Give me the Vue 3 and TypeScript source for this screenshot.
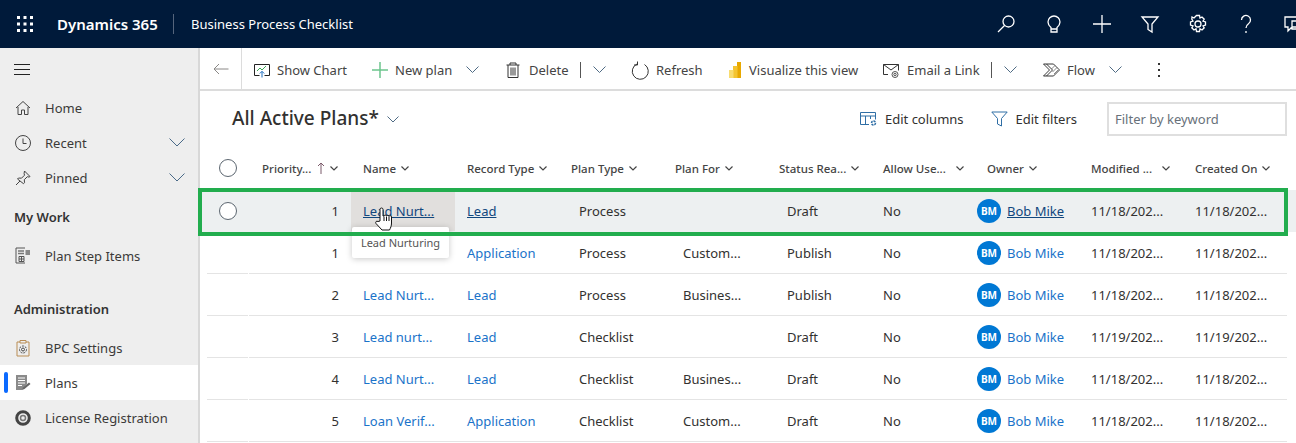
<script setup lang="ts">
type Cmd = { label: string; w: number; gap: number; svg: string; sep?: boolean; chev?: boolean }
type Row = {
  pri: string
  name: string
  rec: string
  plan: string
  planFor: string
  status: string
  mod: string
  created: string
}

const topIcons = [
  '<circle cx="12.5" cy="7.5" r="5.5"/><path d="M8.5 11.5 2 18"/>',
  '<path d="M7 13.5c-1.5-1.3-3-3-3-5.5a6 6 0 0 1 12 0c0 2.500-1.500 4.200-3 5.500v4.500H7zM7 15h6"/>',
  '<path d="M10 1v18M1 10h18"/>',
  '<path d="M2 3h16l-6 7v8l-4-2.500V10z"/>',
  '<circle cx="10" cy="10" r="3"/><path d="M8.500 1.500h3l.5 2.500 2-1 2.200 2.200-1.200 2 2.500.8v3l-2.500.8 1.200 2-2.200 2.200-2-1.200-.5 2.700h-3l-.5-2.700-2 1.200-2.200-2.200 1.200-2-2.500-.8v-3l2.500-.8-1.200-2L4 3l2 1z"/>',
  '<path d="M5.500 6a4.500 4.500 0 1 1 7 3.700c-1.500 1-2.500 1.800-2.500 4.300M10 17v2"/>',
  '<path d="M1 3h14v10H8l-4 4v-4H1zM8 7h11v8h-2v3l-3-3H8z"/>',
]

const cmds: Cmd[] = [
  {
    label: 'Show Chart',
    w: 118,
    gap: 7,
    svg: '<path d="M.5 2.500h15v11h-5M5.500 13.500h-5v-11" stroke="#222"/><path d="m3 9 3-3 2 2 4-4" stroke="#3aa655"/><path d="M8 15.500v-6M5.800 11.500 8 9.300l2.200 2.200" stroke="#1f6fc0"/>',
  },
  {
    label: 'New plan',
    w: 134,
    gap: 7,
    chev: true,
    svg: '<path d="M8 0v16M0 8h16" stroke="#6cc58d" stroke-width="1.500"/>',
  },
  {
    label: 'Delete',
    w: 126,
    gap: 7,
    sep: true,
    chev: true,
    svg: '<path d="M.5 3h13M4 3V1h6v2M2 3v12.500h10V3M5 5.500v8M7 5.500v8M9 5.500v8" stroke="#333"/>',
  },
  {
    label: 'Refresh',
    w: 96,
    gap: 8,
    svg: '<path d="M12.500 2.500a8 8 0 1 1-7.500-.5M5.500 -.5v3.500H2" stroke="#333" transform="translate(0 0)"/>',
  },
  {
    label: 'Visualize this view',
    w: 155,
    gap: 5,
    svg: '<rect x="9" y="0" width="4" height="16" fill="#e8a800"/><rect x="5" y="4" width="4.500" height="12" fill="#f4c430"/><rect x="1" y="8" width="4.500" height="8" fill="#f8dc70"/>',
  },
  {
    label: 'Email a Link',
    w: 160,
    gap: 8,
    sep: true,
    chev: true,
    svg: '<path d="M5 12.500H.5v-10h15v6M.5 2.500 8 8l7.500-5.500" stroke="#333"/><circle cx="12" cy="12.500" r="3" stroke="#555"/><circle cx="12" cy="12.500" r="1.200" stroke="#555"/>',
  },
  {
    label: 'Flow',
    w: 114,
    gap: 8,
    chev: true,
    svg: '<path d="M.5 2h10l6 6-6 6H.5l6-6zM3.500 2l6 6-6 6" stroke="#222" stroke-width=".9"/><path d="m12 3.500-3.500 3.500M14 5.500l-4.500 4.500M15 8l-4 4" stroke="#555" stroke-width=".7"/>',
  },
]

const navTop = [
  {
    label: 'Home',
    svg: '<path d="M1 8 8 1.500 15 8M3 7v7.500h3.500V10h3v4.500H13V7"/>',
    chev: false,
  },
  {
    label: 'Recent',
    svg: '<circle cx="8" cy="8" r="7.500"/><path d="M8 3.500V8.500h3.500"/>',
    chev: true,
  },
  {
    label: 'Pinned',
    svg: '<path d="M9.500 1 15 6.500l-1 .6-1.700-.4-3 3 .2 3-1 1L2.500 9l1-1 3 .2 3-3-.4-1.700zM5 11l-4 4"/>',
    chev: true,
  },
]

const rows: Row[] = [
  { pri: '1', name: 'Lead Nurt...', rec: 'Lead', plan: 'Process', planFor: '', status: 'Draft', mod: '11/18/202...', created: '11/18/202...' },
  { pri: '1', name: '', rec: 'Application', plan: 'Process', planFor: 'Custom...', status: 'Publish', mod: '11/18/202...', created: '11/18/202...' },
  { pri: '2', name: 'Lead Nurt...', rec: 'Lead', plan: 'Process', planFor: 'Busines...', status: 'Publish', mod: '11/18/202...', created: '11/18/202...' },
  { pri: '3', name: 'Lead nurt...', rec: 'Lead', plan: 'Checklist', planFor: '', status: 'Draft', mod: '11/19/202...', created: '11/19/202...' },
  { pri: '4', name: 'Lead Nurt...', rec: 'Lead', plan: 'Checklist', planFor: 'Busines...', status: 'Draft', mod: '11/18/202...', created: '11/18/202...' },
  { pri: '5', name: 'Loan Verif...', rec: 'Application', plan: 'Checklist', planFor: 'Custom...', status: 'Draft', mod: '11/18/202...', created: '11/18/202...' },
]

const cols = ['Name', 'Record Type', 'Plan Type', 'Plan For', 'Status Rea...', 'Allow Use...', 'Owner', 'Modified ...', 'Created On']
const wideChev = ['Allow Use...', 'Modified ...']
</script>

<template>
  <div class="app">
    <header class="topbar">
      <svg class="waffle" width="16" height="16" viewBox="0 0 16 16" fill="#fff">
        <template v-for="y in [0, 6.500, 13]" :key="y">
          <rect v-for="x in [0, 6.500, 13]" :key="x" :x="x" :y="y" width="3" height="3" />
        </template>
      </svg>
      <span class="brand">Dynamics 365</span>
      <span class="appname">Business Process Checklist</span>
      <div class="top-icons">
        <span v-for="(ic, i) in topIcons" :key="i" class="top-icon">
          <svg width="20" height="20" viewBox="0 0 20 20" fill="none" stroke="#fff" stroke-width="1.300" v-html="ic" />
        </span>
      </div>
    </header>

    <div class="body">
      <aside class="side">
        <div class="burger"><i /><i /><i /></div>
        <div v-for="n in navTop" :key="n.label" class="nav-item">
          <svg width="16" height="16" viewBox="0 0 16 16" fill="none" stroke="#444" v-html="n.svg" />
          <span>{{ n.label }}</span>
          <svg v-if="n.chev" class="nav-chev" width="16" height="9" viewBox="0 0 16 9" fill="none" stroke="#4a6a88"><path d="m.5.5 7.500 7.500 7.500-7.500" /></svg>
        </div>
        <div class="nav-head first">My Work</div>
        <div class="nav-item">
          <svg width="16" height="18" viewBox="0 0 16 18" fill="none" stroke="#555">
            <path d="M10 1H1v15h9" />
            <path d="M3 4h6M3 6.500h6" stroke="#777" stroke-width="1.500" />
            <path d="M4 9.500h5v5H4zM6.500 9.500v5M4 12h5" />
            <path d="M10.500 3h4.500v5h-4.500z" fill="#888" stroke="none" />
          </svg>
          <span>Plan Step Items</span>
        </div>
        <div class="nav-head second">Administration</div>
        <div class="nav-item">
          <svg width="16" height="18" viewBox="0 0 16 18" fill="none" stroke="#444">
            <path d="M5 3H2v14h12V3h-3M5 1.500h6V4H5z" stroke="#b98d55" />
            <circle cx="8" cy="10.500" r="1.500" />
            <circle cx="8" cy="10.500" r="3.500" stroke-dasharray="2 1" />
          </svg>
          <span>BPC Settings</span>
        </div>
        <div class="nav-item active">
          <svg width="16" height="18" viewBox="0 0 16 18">
            <path d="M1 1h11v9l-5 6H1z" fill="#8a8a8a" />
            <path d="M3 4h7M3 6.500h7M3 9h7M3 11.500h4" stroke="#fff" />
            <path d="m7 16 1-2.500 6-5 1.500 1.500-6 5z" fill="#666" />
          </svg>
          <span>Plans</span>
        </div>
        <div class="nav-item">
          <svg width="16" height="16" viewBox="0 0 16 16" fill="none">
            <circle cx="8" cy="8" r="6.300" stroke="#444" stroke-width="3" />
            <circle cx="8" cy="8" r="2.500" stroke="#777" stroke-width="1.500" />
          </svg>
          <span>License Registration</span>
        </div>
      </aside>

      <main class="main">
        <div class="cmdbar">
          <div class="back">
            <svg width="16" height="12" viewBox="0 0 16 12" fill="none" stroke="#8a8886"><path d="M15.500 6H1M6 1 1 6l5 5" /></svg>
          </div>
          <div class="cmds">
            <div v-for="c in cmds" :key="c.label" class="cmd" :style="{ width: c.w + 'px' }">
              <svg :style="{ marginRight: c.gap + 'px' }" width="16" height="16" viewBox="0 0 16 16" fill="none" overflow="visible" v-html="c.svg" />
              <span>{{ c.label }}</span>
              <i v-if="c.sep" class="sep" />
              <svg v-if="c.chev" class="cmd-chev" :class="{ split: c.sep }" width="13" height="7" viewBox="0 0 13 7" fill="none" stroke="#4f6b84"><path d="m.5.5 6 6 6-6" /></svg>
            </div>
            <svg class="dots" width="4" height="14" viewBox="0 0 4 14" fill="#333"><rect x="1" y="0" width="2" height="2" /><rect x="1" y="6" width="2" height="2" /><rect x="1" y="12" width="2" height="2" /></svg>
          </div>
        </div>

        <div class="viewbar">
          <h1 class="title">All Active Plans*</h1>
          <svg class="title-chev" width="12" height="7" viewBox="0 0 12 7" fill="none" stroke="#4f6b84"><path d="m.5.5 5.500 5.500 5.500-5.500" /></svg>
          <div class="view-actions">
            <span class="action cols">
              <svg width="18" height="16" viewBox="0 0 18 16" fill="none" stroke="#2f6ea5">
                <path d="M9 13.500H.5V1.500h15v7M.5 5h15M5.500 5v8.500M10.500 5v3" />
                <circle cx="13.500" cy="12" r="2" stroke-width="1.500" stroke-dasharray="2 .8" />
              </svg>
              Edit columns
            </span>
            <span class="action filt">
              <svg width="17" height="16" viewBox="0 0 17 16" fill="none" stroke="#2f6ea5"><path d="M.8 1h15.400l-5.700 6.500v7.500l-4-2V7.500z" /></svg>
              Edit filters
            </span>
            <input class="filter" type="text" placeholder="Filter by keyword" />
          </div>
        </div>

        <div class="grid">
          <div class="row head">
            <div class="cell check"><span class="radio" /></div>
            <div class="cell hcell pri-head">
              <span>Priority...</span>
              <svg class="arrow" width="8" height="12" viewBox="0 0 8 12" fill="none" stroke="#7b5a6a"><path d="M4 12V1M1 4l3-3 3 3" /></svg>
              <svg class="hchev" width="8" height="5" viewBox="0 0 8 5" fill="none" stroke="#444" stroke-width="1.200"><path d="m.5.5 3.500 3.500 3.500-3.500" /></svg>
            </div>
            <div v-for="h in cols" :key="h" class="cell hcell" :class="{ wide: wideChev.includes(h) }">
              <span>{{ h }}</span>
              <svg class="hchev" width="8" height="5" viewBox="0 0 8 5" fill="none" stroke="#444" stroke-width="1.200"><path d="m.5.5 3.500 3.500 3.500-3.500" /></svg>
            </div>
          </div>

          <div v-for="(r, i) in rows" :key="i" class="row data" :class="{ hover: i === 0 }">
            <div class="cell check"><span v-if="i === 0" class="radio on" /></div>
            <div class="cell num">{{ r.pri }}</div>
            <div class="cell" :class="{ namehover: i === 0 }"><a class="link">{{ r.name }}</a></div>
            <div class="cell"><a class="link">{{ r.rec }}</a></div>
            <div class="cell shift">{{ r.plan }}</div>
            <div class="cell shift">{{ r.planFor }}</div>
            <div class="cell shift">{{ r.status }}</div>
            <div class="cell">No</div>
            <div class="cell owner">
              <span class="avatar">BM</span>
              <a class="link">Bob Mike</a>
            </div>
            <div class="cell">{{ r.mod }}</div>
            <div class="cell">{{ r.created }}</div>
          </div>

          <div class="tooltip">Lead Nurturing</div>
          <div class="mark" />
          <svg class="hand" width="18" height="24" viewBox="0 0 18 24" fill="#fff" stroke="#111">
            <path d="M5 14V2.500a1.500 1.500 0 0 1 3 0V9l1 0a1.300 1.300 0 0 1 2.500 0 1.300 1.300 0 0 1 2.500.5 1.300 1.300 0 0 1 2.500.5v6c0 3-1 5-2 7H7L1 16.500c-1-1.500 .5-3 2-2z" />
            <path d="M9 9.500V14M11.500 9.500V14M14 10V14" />
          </svg>
        </div>
      </main>
    </div>
  </div>
</template>

<style scoped>
.app {
  width: 1296px;
  height: 443px;
  overflow: hidden;
  font-family: "Noto Sans", "Open Sans", sans-serif;
  font-size: 13px;
  color: #323130;
  background: #fff;
}

.topbar {
  height: 48px;
  background: #001a3a;
  color: #fff;
  display: flex;
  align-items: center;
  padding-left: 17px;
}

.waffle {
  flex: none;
}

.brand {
  margin-left: 24px;
  width: 116px;
  font-size: 15px;
  font-weight: 600;
  border-right: 1px solid #55657c;
  line-height: 20px;
}

.appname {
  margin-left: 17px;
  font-size: 13px;
}

.top-icons {
  display: flex;
  margin-left: auto;
  margin-right: -22px;
}

.top-icon {
  width: 48px;
  height: 48px;
  display: flex;
  align-items: center;
  justify-content: center;
}

.body {
  display: flex;
  height: 395px;
}

.side {
  width: 198px;
  flex: none;
  background: #eeeeee;
  border-right: 2px solid #d8d8d8;
}

.burger {
  height: 42px;
  padding-left: 14px;
  display: flex;
  flex-direction: column;
  justify-content: center;
  gap: 4px;
}

.burger i {
  display: block;
  width: 16px;
  height: 1px;
  background: #222;
}

.nav-item {
  height: 35px;
  padding-left: 15px;
  display: flex;
  align-items: center;
  gap: 14px;
  position: relative;
  color: #3b3a39;
}

.nav-chev {
  margin-left: auto;
  margin-right: 13px;
}

.nav-head {
  height: 35px;
  line-height: 35px;
  padding-left: 14px;
  font-weight: 600;
  color: #333;
}

.nav-head.first {
  margin-top: 5px;
  margin-bottom: 3px;
}

.nav-head.second {
  margin-top: 19px;
  margin-bottom: 3px;
}

.nav-item.active {
  background: #fff;
}

.nav-item.active::before {
  content: "";
  position: absolute;
  left: 4px;
  top: 7px;
  width: 4px;
  height: 21px;
  border-radius: 2px;
  background: #0b6aff;
}

.main {
  flex: 1;
  min-width: 0;
}

.cmdbar {
  display: flex;
  border-bottom: 2px solid #dcdcdc;
  height: 41px;
}

.back {
  width: 41px;
  display: flex;
  align-items: center;
  justify-content: center;
  border-right: 1px solid #dcdcdc;
  flex: none;
}

.cmds {
  display: flex;
  align-items: center;
  padding-left: 12px;
  padding-top: 2px;
}

.cmd {
  display: flex;
  align-items: center;
  flex: none;
  white-space: nowrap;
  color: #444;
}

.cmd svg {
  flex: none;
}

.cmd-chev {
  margin-left: 14px;
}

.cmd-chev.split {
  margin-left: 12px;
}

.sep {
  width: 1px;
  height: 16px;
  background: #555;
  margin-left: 11px;
}

.viewbar {
  height: 58px;
  display: flex;
  align-items: center;
  padding-left: 32px;
  padding-right: 9px;
  margin-top: -1px;
}

.title {
  margin: 0 0 2px;
  font-size: 19px;
  font-weight: 500;
  color: #323130;
}

.title-chev {
  margin-left: 8px;
}

.view-actions {
  margin-left: auto;
  display: flex;
  align-items: center;
}

.action {
  display: flex;
  align-items: center;
  gap: 7px;
  white-space: nowrap;
}

.action.cols {
  margin-right: 27px;
}

.action.filt {
  margin-right: 30px;
  gap: 8px;
}

.filter {
  width: 180px;
  height: 34px;
  box-sizing: border-box;
  border: 2px solid #dfdfdf;
  padding: 0 6px;
  font: inherit;
  outline: none;
}

.filter::placeholder {
  color: #68717a;
  opacity: 1;
}

.grid {
  padding-left: 7px;
  position: relative;
}

.row {
  display: grid;
  grid-template-columns: 42px 102px repeat(9, 104px);
  height: 42px;
  white-space: nowrap;
}

.row.head .cell {
  padding-bottom: 2px;
}

.row.data.hover {
  margin-left: -5px;
  padding-left: 5px;
  background: #edf0f1;
}

.cell {
  display: flex;
  align-items: center;
  padding-left: 12px;
  min-width: 0;
}

.cell.shift {
  padding-left: 20px;
}

.row.data .cell {
  border-bottom: 1px solid #e4e4e4;
}

.row.data.hover .cell {
  border-bottom-color: #edf0f1;
}

.check {
  padding-left: 12px;
  margin-right: 1px;
}

.radio {
  display: block;
  width: 18px;
  height: 18px;
  box-sizing: border-box;
  border: 1px solid #5c6670;
  border-radius: 50%;
  background: #fff;
}

.hcell {
  font-size: 11.5px;
  font-weight: 500;
  color: #444;
}

.hchev {
  margin-left: 5px;
}

.wide .hchev {
  margin-left: 10px;
}

.pri-head {
  padding-left: 13px;
}

.arrow {
  margin-left: 6px;
}

.num {
  justify-content: flex-end;
  padding-right: 12px;
  padding-left: 0;
}

.namehover {
  background: #e1dfdd;
}

.link {
  color: #1a73c9;
}

.hover .link {
  color: #11477e;
  text-decoration: underline;
}

.owner {
  padding-left: 2px;
  gap: 6px;
}

.avatar {
  width: 24px;
  height: 24px;
  flex: none;
  border-radius: 50%;
  background: #0078d4;
  color: #fff;
  font-size: 10px;
  font-weight: 700;
  display: flex;
  align-items: center;
  justify-content: center;
}

.tooltip {
  position: absolute;
  left: 152px;
  top: 79px;
  width: 97px;
  height: 31px;
  background: #fff;
  border-radius: 2px;
  box-shadow: 0 1px 6px rgba(0, 0, 0, 0.22);
  font-size: 11px;
  color: #555;
  display: flex;
  align-items: center;
  justify-content: center;
}

.mark {
  position: absolute;
  left: -2px;
  top: 40px;
  width: 1090px;
  height: 48px;
  box-sizing: border-box;
  border: 4px solid #22ad4e;
}

.hand {
  position: absolute;
  left: 175px;
  top: 59px;
}
</style>

<style>
html,
body {
  margin: 0;
  overflow: hidden;
}
</style>
